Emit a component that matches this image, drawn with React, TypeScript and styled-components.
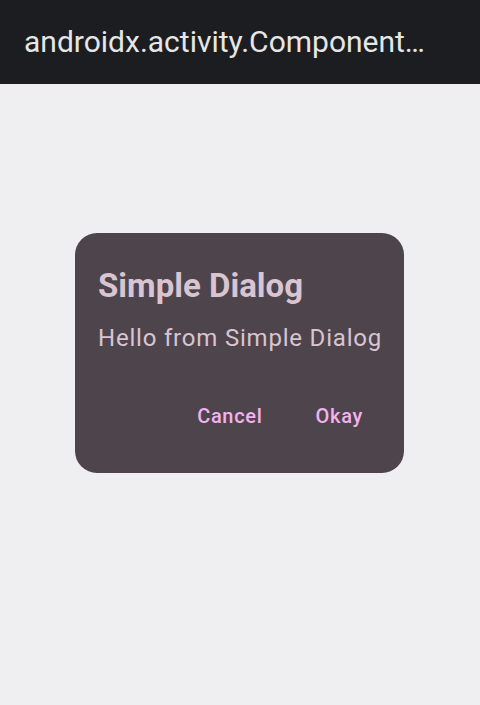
import React from "react";
import styled, { createGlobalStyle } from "styled-components";

const Global = createGlobalStyle`
  html, body { margin: 0; padding: 0; height: 100%; }
  body { background: #efeff1; font-family: Roboto, "Noto Sans", sans-serif; }
  #root { height: 100%; }
`;

const Screen = styled.div`
  position: relative;
  height: 705px;
  display: flex;
  flex-direction: column;
  background: #efeff1;
`;

const TopBar = styled.header`
  height: 84px;
  background: #1b1d20;
  display: flex;
  align-items: center;
  padding: 0 24px;
  box-sizing: border-box;
`;

const Title = styled.h1`
  margin: 0;
  margin-top: -1px;
  font-size: 30px;
  font-weight: 400;
  color: #e6e6e6;
  white-space: nowrap;
`;

const Overlay = styled.div`
  position: absolute;
  inset: 0;
  display: flex;
  align-items: center;
  justify-content: center;
`;

const Dialog = styled.div`
  width: 329px;
  height: 240px;
  box-sizing: border-box;
  background: #4e454c;
  border-radius: 22px;
  padding: 33px 24px 0 23px;
  display: flex;
  flex-direction: column;
  margin-left: -1px;
`;

const DialogTitle = styled.h2`
  margin: 0;
  font-size: 33px;
  font-weight: 700;
  line-height: 40px;
  color: #d9c4d2;
  white-space: nowrap;
`;

const DialogText = styled.p`
  margin: 16px 0 0;
  font-size: 24px;
  line-height: 32px;
  letter-spacing: 0.8px;
  color: #d9c4d2;
  white-space: nowrap;
`;

const Actions = styled.div`
  display: flex;
  justify-content: flex-end;
  gap: 29px;
  margin-top: 42px;
  margin-right: 5px;
`;

const TextButton = styled.button`
  background: none;
  border: none;
  font-family: Roboto, "Noto Sans", sans-serif;
  font-size: 20px;
  line-height: normal;
  font-weight: 500;
  letter-spacing: 0.7px;
  color: #f3b2ee;
  padding: 8px 12px;
  cursor: pointer;
`;

export default function App() {
  return (
    <>
      <Global />
      <Screen>
        <TopBar>
          <Title>androidx.activity.Component…</Title>
        </TopBar>
        <Overlay>
          <Dialog>
            <DialogTitle>Simple Dialog</DialogTitle>
            <DialogText>Hello from Simple Dialog</DialogText>
            <Actions>
              <TextButton>Cancel</TextButton>
              <TextButton>Okay</TextButton>
            </Actions>
          </Dialog>
        </Overlay>
      </Screen>
    </>
  );
}
